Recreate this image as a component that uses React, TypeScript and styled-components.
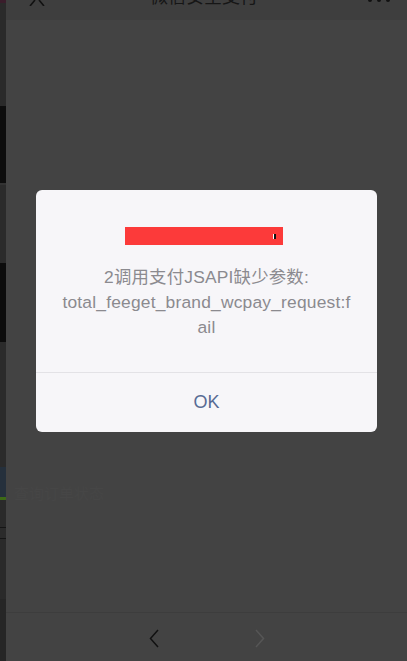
import styled, { createGlobalStyle } from 'styled-components';

const GlobalStyle = createGlobalStyle`
  html, body {
    margin: 0;
    padding: 0;
    background: #434343;
  }
  body {
    font-family: "Liberation Sans", "Noto Sans CJK SC", sans-serif;
  }
`;

const Page = styled.div`
  display: flex;
  width: 407px;
  height: 661px;
  overflow: hidden;
`;

const SideStrip = styled.div`
  flex: 0 0 6px;
  display: flex;
  flex-direction: column;
  background: #2a2a2a;
`;

const StripBlock = styled.div<{ $h: number; $c: string }>`
  flex: 0 0 ${({ $h }) => $h}px;
  background: ${({ $c }) => $c};
`;

const Main = styled.div`
  flex: 1;
  display: flex;
  flex-direction: column;
  background: #434343;
`;

const NavBar = styled.div`
  flex: 0 0 20px;
  display: flex;
  align-items: flex-start;
  justify-content: space-between;
  padding: 0 16px 0 23px;
  background: #3e3e3e;
  overflow: hidden;
`;

const NavTitle = styled.div`
  margin-top: -13px;
  margin-left: -4px;
  font-size: 18px;
  line-height: 20px;
  color: #161616;
`;

const NavIcon = styled.svg`
  display: block;
`;

const Content = styled.div`
  flex: 1;
  display: flex;
  flex-direction: column;
  align-items: center;
  padding-top: 170px;
`;

const Dialog = styled.div`
  width: 341px;
  background: #f7f6f9;
  border-radius: 6px;
  display: flex;
  flex-direction: column;
  overflow: hidden;
`;

const DialogBody = styled.div`
  display: flex;
  flex-direction: column;
  align-items: center;
  padding: 37px 24px 32px;
  border-bottom: 1px solid #e3e2e6;
`;

const RedBar = styled.div`
  width: 158px;
  height: 18px;
  margin: 0 6px 20px 0;
  background: #fc3a3a;
  display: flex;
  align-items: center;
  justify-content: flex-end;
  padding-right: 7px;
  box-sizing: border-box;
`;

const Tick = styled.span`
  width: 2px;
  height: 5px;
  background: #111;
  border-left: 1px solid #fff;
`;

const Message = styled.div`
  width: 100%;
  text-align: center;
  font-size: 17.4px;
  line-height: 25px;
  letter-spacing: 0.2px;
  color: #8b8a8f;
  overflow-wrap: anywhere;
  word-break: break-all;
`;

const OkButton = styled.button`
  height: 59px;
  border: none;
  background: transparent;
  font-family: inherit;
  font-size: 18px;
  color: #586b94;
  cursor: pointer;
`;

const FaintText = styled.div`
  margin-top: 50px;
  align-self: flex-start;
  padding-left: 8px;
  font-size: 15px;
  color: #464646;
`;

const Toolbar = styled.div`
  flex: 0 0 46px;
  display: flex;
  align-items: center;
  justify-content: center;
  gap: 96px;
  border-top: 1px solid #3d3d3d;
  padding-top: 2px;
`;

const strip: [number, string][] = [
  [3, '#3a1d2b'],
  [103, '#2a2a2a'],
  [77, '#0d0d0d'],
  [2, '#333'],
  [78, '#2b2b2b'],
  [79, '#0c0c0c'],
  [125, '#2b2b2b'],
  [30, '#25303c'],
  [3, '#3d6a16'],
  [27, '#2a2a2a'],
  [1, '#151515'],
  [10, '#2b2b2b'],
  [1, '#151515'],
  [60, '#2a2a2a'],
  [62, '#262626'],
];

const Chevron = ({ dir, color }: { dir: 'left' | 'right'; color: string }) => (
  <svg width="10" height="19" viewBox="0 0 10 19">
    <path
      d={dir === 'left' ? 'M9 1 L1.5 9.5 L9 18' : 'M1 1 L8.5 9.5 L1 18'}
      fill="none"
      stroke={color}
      strokeWidth="1.5"
    />
  </svg>
);

export default function App() {
  return (
    <>
      <GlobalStyle />
      <Page>
        <SideStrip>
          {strip.map(([h, c], i) => (
            <StripBlock key={i} $h={h} $c={c} />
          ))}
        </SideStrip>
        <Main>
          <NavBar>
            <NavIcon width="16" height="6" viewBox="0 0 16 6">
              <path d="M1 6 L6 0 M15 6 L10 0" stroke="#111" strokeWidth="1.6" fill="none" />
            </NavIcon>
            <NavTitle>微信安全支付</NavTitle>
            <NavIcon width="24" height="3" viewBox="0 0 24 3">
              <circle cx="3" cy="0" r="2" fill="#111" />
              <circle cx="12" cy="0" r="2" fill="#111" />
              <circle cx="21" cy="0" r="2" fill="#111" />
            </NavIcon>
          </NavBar>
          <Content>
            <Dialog>
              <DialogBody>
                <RedBar>
                  <Tick />
                </RedBar>
                <Message>
                  2调用支付JSAPI缺少参数:
                  <br />
                  total_feeget_brand_wcpay_request:fail
                </Message>
              </DialogBody>
              <OkButton>OK</OkButton>
            </Dialog>
            <FaintText>查询订单状态</FaintText>
          </Content>
          <Toolbar>
            <Chevron dir="left" color="#111" />
            <Chevron dir="right" color="#565656" />
          </Toolbar>
        </Main>
      </Page>
    </>
  );
}
